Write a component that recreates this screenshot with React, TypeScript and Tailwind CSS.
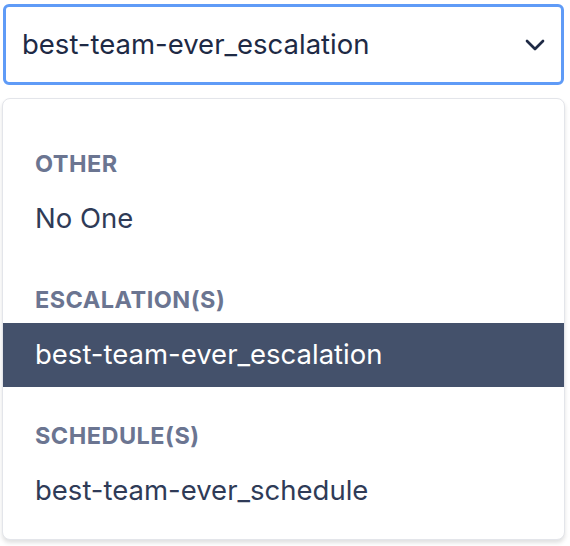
import { ChevronDown } from "lucide-react";

type Group = { label: string; items: string[] };

const groups: Group[] = [
  { label: "Other", items: ["No One"] },
  { label: "Escalation(s)", items: ["best-team-ever_escalation"] },
  { label: "Schedule(s)", items: ["best-team-ever_schedule"] },
];

const selected = "best-team-ever_escalation";

export default function App() {
  return (
    <div className="h-[546px] w-[570px] overflow-hidden bg-white font-['Inter',sans-serif]">
      <div className="pl-[3px] pr-[6px] pt-[4px]">
        <button className="flex h-[81px] w-full items-center justify-between rounded-[6px] border-[3px] border-[#5f9bf7] bg-white pl-[16px] pr-[10px] text-left">
          <span className="text-[27.5px] text-[#1e2a45]">{selected}</span>
          <ChevronDown className="h-[32px] w-[32px] text-[#1e2a45]" strokeWidth={2} />
        </button>
      </div>

      <div className="ml-[2px] mr-[5px] mt-[13px] rounded-[8px] border border-[#e3e5ea] bg-white py-4 shadow-[0_3px_4px_rgba(0,0,0,0.12)]">
        {groups.map((g) => (
          <div key={g.label} className="pt-[26px]">
            <div className="flex h-[46px] items-center px-[32px] text-[23.5px] font-bold uppercase tracking-[0.02em] text-[#6b7591]">
              {g.label}
            </div>
            {g.items.map((item) => (
              <div
                key={item}
                className={
                  item === selected
                    ? "flex h-[64px] items-center bg-[#44516b] px-[32px] text-[27.5px] text-white"
                    : "flex h-[64px] items-center px-[32px] text-[27.5px] text-[#2f3b57]"
                }
              >
                {item}
              </div>
            ))}
          </div>
        ))}
      </div>
    </div>
  );
}
